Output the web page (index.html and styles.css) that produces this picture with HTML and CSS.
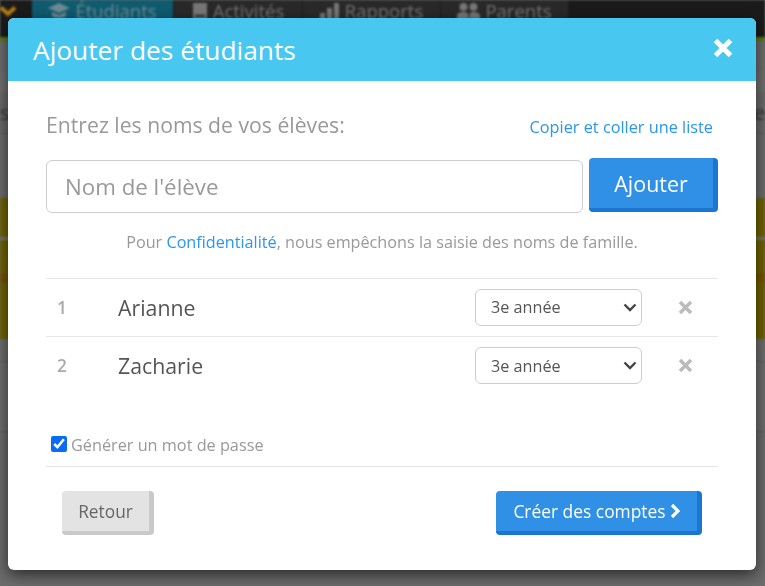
FILE: index.html
```html
<!DOCTYPE html>
<html lang="fr">
<head>
<meta charset="utf-8">
<title>Ajouter des étudiants</title>
<link rel="stylesheet" href="styles.css">
</head>
<body>
<div class="page">
  <nav class="nav">
    <span class="nav-toggle"><svg width="18" height="12" viewBox="0 0 18 12"><path d="M2 2.500l7 6.500 7-6.500" fill="none" stroke="#b27c10" stroke-width="4"/></svg></span>
    <a class="tab tab-active"><svg width="22" height="16" viewBox="0 0 22 16"><path d="M11 0L0 5l11 5 11-5z M4 9v4c2 2.500 12 2.500 14 0V9l-7 3z" fill="#6f8a92"/></svg>Étudiants</a>
    <a class="tab tab-a"><svg width="16" height="18" viewBox="0 0 16 18"><path d="M1 0h14v18H1z M3 12v2h10v-2z" fill="#777" fill-rule="evenodd"/></svg>Activités</a>
    <a class="tab tab-b"><svg width="20" height="18" viewBox="0 0 20 18"><path d="M0 10h5v8H0z M7 5h5v13H7z M14 0h5v18h-5z" fill="#777"/></svg>Rapports</a>
    <a class="tab tab-c"><svg width="23" height="17" viewBox="0 0 23 17"><circle cx="6.500" cy="4" r="4" fill="#777"/><circle cx="16.500" cy="4" r="4" fill="#777"/><path d="M0 17v-4c0-3 3-4 6.500-4s5 1 5 4v4z M12.500 17v-4c0-3 1-4 4-4s6.500 1 6.500 4v4z" fill="#777"/></svg>Parents</a>
  </nav>
  <div class="nav-accent"></div>
  <div class="band band-a"></div>
  <div class="band band-b"><span>s</span><span>te</span></div>
  <div class="olive">
    <div class="olive-a"></div>
    <div class="olive-b"></div>
    <div class="olive-c"></div>
  </div>
  <div class="band band-c"></div>
  <div class="band band-d"></div>
</div>

<div class="modal">
  <header class="modal-head">
    <h1 class="modal-title">Ajouter des étudiants</h1>
    <svg class="close" width="20" height="20" viewBox="0 0 20 20"><path d="M2.500 2.500l15 15M17.500 2.500l-15 15" stroke="#fff" stroke-width="5"/></svg>
  </header>
  <div class="modal-body">
    <div class="prompt-row">
      <label class="prompt">Entrez les noms de vos élèves:</label>
      <a class="link paste">Copier et coller une liste</a>
    </div>
    <div class="add-row">
      <input class="name-input" type="text" placeholder="Nom de l'élève">
      <button class="btn btn-blue btn-add">Ajouter</button>
    </div>
    <p class="notice">Pour <a class="link">Confidentialité</a>, nous empêchons la saisie des noms de famille.</p>
    <ul class="students">
      <li class="student">
        <span class="num">1</span>
        <span class="name">Arianne</span>
        <select class="grade"><option>3e année</option></select>
        <svg class="remove" width="15" height="15" viewBox="0 0 15 15"><path d="M2 2l11 11M13 2L2 13" stroke="#bbb" stroke-width="3.500"/></svg>
      </li>
      <li class="student">
        <span class="num">2</span>
        <span class="name">Zacharie</span>
        <select class="grade"><option>3e année</option></select>
        <svg class="remove" width="15" height="15" viewBox="0 0 15 15"><path d="M2 2l11 11M13 2L2 13" stroke="#bbb" stroke-width="3.500"/></svg>
      </li>
    </ul>
    <label class="password"><input type="checkbox" checked>Générer un mot de passe</label>
    <div class="actions">
      <button class="btn btn-grey">Retour</button>
      <button class="btn btn-blue btn-create">Créer des comptes<svg width="10" height="16" viewBox="0 0 10 16"><path d="M2 2l6 6-6 6" fill="none" stroke="#fff" stroke-width="3.200"/></svg></button>
    </div>
  </div>
</div>
</body>
</html>
```
FILE: styles.css
```css
* { box-sizing: border-box; }
html, body { margin: 0; height: 100%; }
body {
  font-family: "Open Sans", "Noto Sans", sans-serif;
  background: #6c6c6c;
  overflow: hidden;
}
.page { height: 586px; display: flex; flex-direction: column; filter: blur(.9px); }
.nav {
  height: 37px;
  flex: none;
  display: flex;
  background: #1b1b1b;
}
.nav-toggle { width: 32px; padding-top: 5px; }
.nav-toggle svg { display: block; margin-left: -1px; }
.tab {
  display: flex;
  align-items: flex-start;
  gap: 5px;
  height: 37px;
  font-size: 18.500px;
  line-height: 22px;
  color: #747474;
  background: #292929;
  border-right: 1px solid #1c1c1c;
  justify-content: center;
}
.tab svg { margin-top: 3px; flex: none; }
.tab-active { width: 142px; background: #0f5b70; color: #6f8a92; }
.tab-a { width: 129px; }
.tab-b { width: 138px; }
.tab-c { width: 128px; }
.nav-accent { height: 4px; flex: none; background: #5f7a12; }
.band { flex: none; border-bottom: 1px solid #5d5d5d; }
.band-a { height: 30px; background: #6e6e6e; border-bottom: 0; }
.band-b {
  height: 63px;
  display: flex;
  justify-content: space-between;
  align-items: center;
  font-size: 20px;
  line-height: 28px;
  color: #333;
  background: #6a6a6a;
  border-top: 21px solid #707070;
}
.olive { flex: none; height: 141px; margin-top: 64px; background: #6f6300; }
.olive-a { height: 42px; border-bottom: 3px solid #777; }
.olive-b { height: 43px; border-bottom: 10px solid #745500; }
.olive-c { height: 56px; }
.band-c { height: 23px; background: #6e6e6e; }
.band-d { height: 70px; background: #6e6e6e; }

.modal {
  position: absolute;
  left: 8px;
  top: 18px;
  width: 748px;
  height: 552px;
  background: #fff;
  border-radius: 6px;
  overflow: hidden;
  box-shadow: 0 5px 15px rgba(0, 0, 0, .6);
  filter: blur(.3px);
}
.modal-head {
  height: 63px;
  padding: 0 23px 0 25px;
  display: flex;
  align-items: center;
  justify-content: space-between;
  background: #48c8f1;
  color: #fff;
}
.modal-title { margin: 0; font-size: 26.300px; line-height: 36px; font-weight: 400; }
.close { display: block; margin-top: -4px; }
.modal-body { padding: 0 38px; color: #999; }
.prompt-row {
  display: flex;
  justify-content: space-between;
  align-items: center;
  height: 78px;
  padding: 27px 5px 18px 0;
}
.prompt { font-size: 21.200px; line-height: 28px; color: #999; }
.link { color: #2a96f0; }
.paste { font-size: 16.300px; line-height: 22px; margin-top: 4px; }
.add-row { display: flex; gap: 6px; height: 55px; margin-top: -1px; }
.name-input {
  width: 537px;
  height: 53px;
  margin-top: 2px;
  padding: 0 18px;
  font: 22.300px "Open Sans", sans-serif;
  color: #555;
  background: #fff;
  border: 1px solid #ccc;
  border-radius: 6px;
  outline: 0;
}
.name-input::placeholder { color: #999; opacity: 1; }
.btn {
  font-family: "Open Sans", sans-serif;
  border-style: solid;
  border-width: 0 5px 4px 0;
  border-radius: 4px;
  padding: 1px 0 0;
}
.btn-blue { background: #2f90e6; border-color: #1b76d2; color: #fff; }
.btn-add { width: 129px; height: 54px; font-size: 21.400px; padding: 0; }
.notice { margin: 19px 0 0; height: 46px; text-align: center; font-size: 16.200px; line-height: 20px; color: #999; }
.students { list-style: none; margin: 0; padding: 0; border-top: 1.500px solid #e6e6e6; }
.student {
  height: 57px;
  display: flex;
  align-items: center;
  padding: 0 0 1px 11px;
}
.student + .student { height: 58px; padding-bottom: 0; border-top: 1.500px solid #e6e6e6; }
.num { width: 61px; font-size: 17.300px; font-weight: 600; color: #aaa; }
.name { width: 357px; font-size: 21.300px; color: #555; }
.grade {
  width: 167px;
  height: 37px;
  padding-left: 15px;
  appearance: none;
  font: 16.200px "Open Sans", sans-serif;
  color: #555;
  background: #fff url("data:image/svg+xml,%3Csvg xmlns='http://www.w3.org/2000/svg' width='14' height='9' viewBox='0 0 14 9'%3E%3Cpath d='M1.500 1.500l5.500 5.500 5.500-5.500' fill='none' stroke='%23444' stroke-width='2.400'/%3E%3C/svg%3E") no-repeat right 4px center;
  border: 1px solid #ccc;
  border-radius: 6px;
}
.remove { margin-left: 36px; display: block; }
.password {
  display: flex;
  align-items: center;
  gap: 4px;
  height: 72.500px;
  padding: 39.500px 0 9px 5px;
  border-bottom: 1px solid #e6e6e6;
  font-size: 16.250px;
  color: #999;
}
.password input { width: 16px; height: 16px; margin: -3px 0 0; accent-color: #0a6cf5; }
.actions { display: flex; justify-content: space-between; padding: 24px 16px 0; }
.btn-grey {
  width: 92px;
  height: 44px;
  font-size: 17.300px;
  background: #e3e3e3;
  border-color: #c9c9c9;
  color: #666;
}
.btn-create {
  width: 206px;
  height: 44px;
  font-size: 17.400px;
  display: flex;
  align-items: center;
  justify-content: center;
  gap: 4px;
}
```
